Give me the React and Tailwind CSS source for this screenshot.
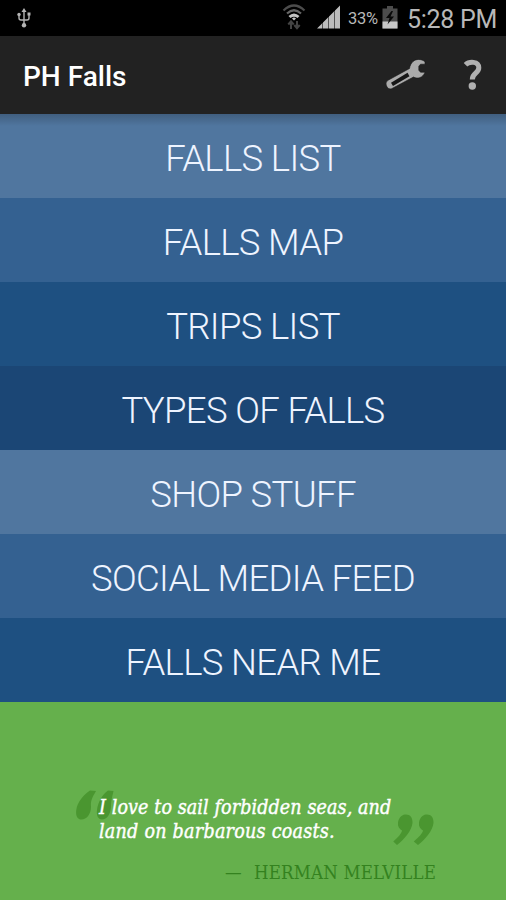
import React from 'react';

const MENU_ITEMS = [
  { label: 'FALLS LIST', bg: 'bg-[#50769f]' },
  { label: 'FALLS MAP', bg: 'bg-[#346191]' },
  { label: 'TRIPS LIST', bg: 'bg-[#1e5081]' },
  { label: 'TYPES OF FALLS', bg: 'bg-[#1b4675]' },
  { label: 'SHOP STUFF', bg: 'bg-[#50769f]' },
  { label: 'SOCIAL MEDIA FEED', bg: 'bg-[#346191]' },
  { label: 'FALLS NEAR ME', bg: 'bg-[#1e5081]' },
];

const UsbIcon = () => (
  <svg className="w-[14px] h-[20px]" viewBox="0 0 14 20" fill="none" stroke="#b4b4b4" strokeWidth="1.4">
    <path d="M7 3v14M2 6.500v3.500q0 2 2 2h3M12 6v4q0 2-2 2H7" />
    <path d="M7 0l2.500 4h-5z" fill="#b4b4b4" stroke="none" />
    <circle cx="7" cy="17.300" r="2.200" fill="#b4b4b4" stroke="none" />
    <circle cx="2" cy="6.500" r="1.700" fill="#b4b4b4" stroke="none" />
    <path d="M10.500 4.500h3v3h-3z" fill="#b4b4b4" stroke="none" />
  </svg>
);

const WifiIcon = () => (
  <svg className="w-[24px] h-[26px]" viewBox="0 0 24 26" fill="none">
    <path d="M1.500 6.500Q12-3.500 22.500 6.500" stroke="#4c4c4c" strokeWidth="2.200" />
    <path d="M5 9.500Q12 3 19 9.500" stroke="#666" strokeWidth="2.200" />
    <path d="M6.500 12Q12 7 17.500 12L15.500 14Q12 11.500 8.500 14z" fill="#c4c4c4" />
    <path d="M10 14.500Q12 12.500 14 14.500L12 16.500z" fill="#c4c4c4" />
    <path d="M9 25v-7M6.300 20.500L9 17.300l2.700 3.200M15 17v7M12.300 21l2.700 3.200 2.700-3.200" stroke="#444" strokeWidth="2" />
  </svg>
);

const SignalIcon = () => (
  <svg className="w-[24px] h-[24px]" viewBox="0 0 24 24" fill="#bdbdbd">
    <path d="M0 23.500L5 18.500v5zM6 17.500l5-5v11H6zM12 11.500l5-5v17h-5zM18 5.500l5-5v23h-5z" />
    <path d="M5.500 18v5.500M11.500 12v11.500M17.500 6v17.500" stroke="#555" />
  </svg>
);

const BatteryIcon = () => (
  <svg className="w-[16px] h-[24px]" viewBox="0 0 16 24">
    <path d="M5 1h6v2.500h4.500v20H.5v-20H5z" fill="#4c4c4c" />
    <path d="M.5 16.500h15v7H.5z" fill="#c8c8c8" />
    <path d="M9.500 6L4 13h3.500L5.500 19.500 12 11.500H8.500L11 6z" fill="#080808" />
  </svg>
);

const WrenchIcon = () => (
  <svg className="w-[40px] h-[32px]" viewBox="0 0 40 32">
    <path
      d="M39 2.800C35.500-.3 30-.2 27 2.500C25 4.500 24 6.500 23.500 9.500L2 21.300C-.5 23-.4 26 1.300 28.300C3 30.500 5 30.300 7 29L27.500 18C31 20.300 37 19 39 13.200H34.500L32.800 11.200V7.200L34.500 5.200H39Z"
      fill="#ababab"
      stroke="#151515"
      strokeWidth="0.6"
      strokeLinejoin="round"
    />
    <path d="M6 25.300L22.500 15.500" stroke="#161616" strokeWidth="3.800" />
  </svg>
);

const HelpIcon = () => (
  <svg className="w-[20px] h-[32px]" viewBox="0 0 20 32">
    <path
      d="M2.500 5.800C6 2.300 15.800 1.800 15.800 8.800C15.800 14.500 9.300 13.500 9.300 20.500"
      fill="none"
      stroke="#b0b0b0"
      strokeWidth="5"
    />
    <circle cx="9.300" cy="27" r="3.700" fill="#b0b0b0" />
  </svg>
);

const OpenQuote = () => (
  <svg className="absolute left-[76px] top-[86px] w-[38px] h-[32px]" viewBox="0 0 38 32" fill="#4a9630">
    <path d="M14 2.500L20 3C16 10 14.500 13 15 19C15 26 10.500 31.500 5.500 31.500C1 31.500-.5 27 .3 22C1.200 14 7.500 7 14 2.500Z" />
    <path d="M32 2.500L37.500 3C36 10 35 13 35 19C34.500 26 31 31.500 26 31.500C22 31.500 20.200 27 21 22C22 14 26 7 32 2.500Z" />
  </svg>
);

const CloseQuote = () => (
  <svg className="absolute left-[393px] top-[110px] w-[41px] h-[34px]" viewBox="0 0 41 34" fill="#4a9630">
    <path d="M12 2.500C17 2 19.800 5.500 19.500 11C18.500 19 11.500 27 4 33L.3 29.500C5.500 25 8.500 21.500 9 18.500C6.500 17 4.500 14.500 5 11C5.500 6.500 8 3 12 2.500Z" />
    <path d="M33 2.500C38 2 40.800 5.500 40.500 11C39.500 19 32.500 27 25 33L20.800 29.500C26 25 29.500 21.500 30 18.500C27.500 17 25.500 14.500 26 11C26.500 6.500 29 3 33 2.500Z" />
  </svg>
);

const StatusBar = () => (
  <div className="flex items-start justify-between h-[36px] pl-[17px] pr-[9px] bg-black text-[#b8b8b8]">
    <div className="pt-[8px]">
      <UsbIcon />
    </div>
    <div className="flex items-start">
      <div className="pt-[4px] mr-[11px]"><WifiIcon /></div>
      <div className="pt-[5px] mr-[7px]"><SignalIcon /></div>
      <span className="w-[31px] mr-[3px] pt-[8px] text-[16.5px] leading-[22px] tracking-[-0.3px] whitespace-nowrap">33%</span>
      <div className="pt-[5px] mr-[9px]"><BatteryIcon /></div>
      <span className="w-[90px] pt-[5px] text-[25px] leading-[30px] tracking-[-0.3px] whitespace-nowrap">5:28 PM</span>
    </div>
  </div>
);

const ActionBar = () => (
  <header className="flex items-center h-[78px] pl-[23px] pr-[23px] bg-[#222222]">
    <h1 className="flex-1 pt-[3px] text-[28px] font-medium text-white">PH Falls</h1>
    <button className="mr-[37px]" aria-label="Settings"><WrenchIcon /></button>
    <button aria-label="Help"><HelpIcon /></button>
  </header>
);

const QuotePanel = () => (
  <section className="relative flex-1 bg-[#65b04c] pt-[94px]">
    <OpenQuote />
    <CloseQuote />
    <blockquote className="relative pl-[99px] font-['DejaVu_Serif_Condensed','DejaVu_Serif',serif] [font-stretch:condensed] italic text-[19.5px] leading-[24px] tracking-[0.1px] text-white whitespace-nowrap [-webkit-text-stroke:0.4px_white]">
      <p>I love to sail forbidden seas, and</p>
      <p className="tracking-[0.25px]">land on barbarous coasts.</p>
    </blockquote>
    <p className="flex items-center mt-[17px] pl-[225px] font-['DejaVu_Serif_Condensed','DejaVu_Serif',serif] [font-stretch:condensed] text-[18.5px] leading-[24px] tracking-[0.2px] text-[#34821f] whitespace-nowrap">
      <span className="w-[29px]">—</span>
      <span>HERMAN MELVILLE</span>
    </p>
  </section>
);

const App = () => (
  <div className="flex flex-col w-[506px] h-[900px] overflow-hidden font-['Roboto',sans-serif]">
    <StatusBar />
    <ActionBar />
    <nav className="relative">
      {MENU_ITEMS.map((item) => (
        <button
          key={item.label}
          className={`flex items-center justify-center w-full h-[84px] pt-[6px] text-[36.5px] font-light tracking-[-0.65px] text-[#eef4ff] whitespace-nowrap ${item.bg}`}
        >
          {item.label}
        </button>
      ))}
      {/* shadow under the action bar */}
      <div className="absolute inset-x-0 top-0 h-[12px] bg-linear-to-b from-black/20 to-transparent" />
    </nav>
    <QuotePanel />
  </div>
);

export default App;
